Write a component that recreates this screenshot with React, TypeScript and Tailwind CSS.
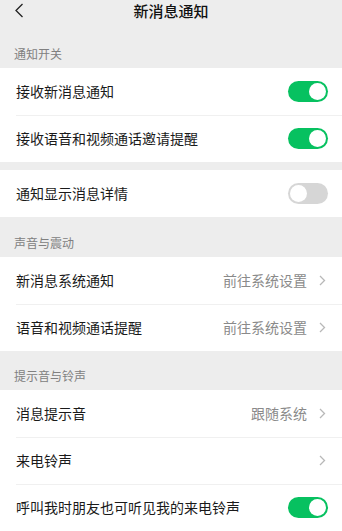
import React from "react";

const font = { fontFamily: '"Noto Sans CJK SC", "Noto Sans", sans-serif' };

function Toggle({ on }: { on: boolean }) {
  return (
    <div
      className={`relative w-[40px] h-[21px] rounded-full ${on ? "bg-[#07c160]" : "bg-[#d6d6d6]"}`}
    >
      <div
        className={`absolute top-[2px] w-[17px] h-[17px] rounded-full bg-white ${on ? "right-[2px]" : "left-[2px]"}`}
      />
    </div>
  );
}

function Chevron() {
  return (
    <svg width="7" height="11" viewBox="0 0 7 11" fill="none">
      <path d="M1 1l4.5 4.5L1 10" stroke="#b8b8b8" strokeWidth="1.3" />
    </svg>
  );
}

function Row({
  label,
  toggle,
  value,
  link,
  divider,
}: {
  label: string;
  toggle?: boolean;
  value?: string;
  link?: boolean;
  divider?: boolean;
}) {
  return (
    <div className="relative bg-white">
      {divider && <div className="absolute top-0 left-4 right-0 h-px bg-[#f0f0f0]" />}
      <div className="h-[47px] flex items-center pl-4 pr-[14px]">
        <div className="flex-1 text-[14px] text-[#1a1a1a]">{label}</div>
        {toggle !== undefined && <Toggle on={toggle} />}
        {link && (
          <div className="flex items-center gap-[12px] pr-[2px]">
            {value && <span className="text-[14px] text-[#8a8a8a]">{value}</span>}
            <Chevron />
          </div>
        )}
      </div>
    </div>
  );
}

function SectionHeader({ title, h }: { title: string; h: string }) {
  return (
    <div className={`${h} flex items-end pl-[14px] pb-[6px]`}>
      <span className="text-[12px] leading-[16px] text-[#808080]">{title}</span>
    </div>
  );
}

export default function App() {
  return (
    <div className="w-[342px] h-[531px] bg-[#ededed] overflow-hidden" style={font}>
      <div className="relative h-[26px] flex items-start justify-center">
        <svg className="absolute left-[14px] top-[3px]" width="10" height="15" viewBox="0 0 10 15" fill="none">
          <path d="M8.5 1L2 7.5 8.5 14" stroke="#222" strokeWidth="1.3" />
        </svg>
        <span className="text-[15px] leading-[22px] font-medium text-[#111] -mt-[0px]">新消息通知</span>
      </div>
      <SectionHeader title="通知开关" h="h-[42px]" />
      <Row label="接收新消息通知" toggle={true} />
      <Row label="接收语音和视频通话邀请提醒" toggle={true} divider />
      <div className="h-[8px]" />
      <Row label="通知显示消息详情" toggle={false} />
      <SectionHeader title="声音与震动" h="h-[40px]" />
      <Row label="新消息系统通知" value="前往系统设置" link />
      <Row label="语音和视频通话提醒" value="前往系统设置" link divider />
      <SectionHeader title="提示音与铃声" h="h-[39px]" />
      <Row label="消息提示音" value="跟随系统" link />
      <Row label="来电铃声" link divider />
      <Row label="呼叫我时朋友也可听见我的来电铃声" toggle={true} divider />
    </div>
  );
}
